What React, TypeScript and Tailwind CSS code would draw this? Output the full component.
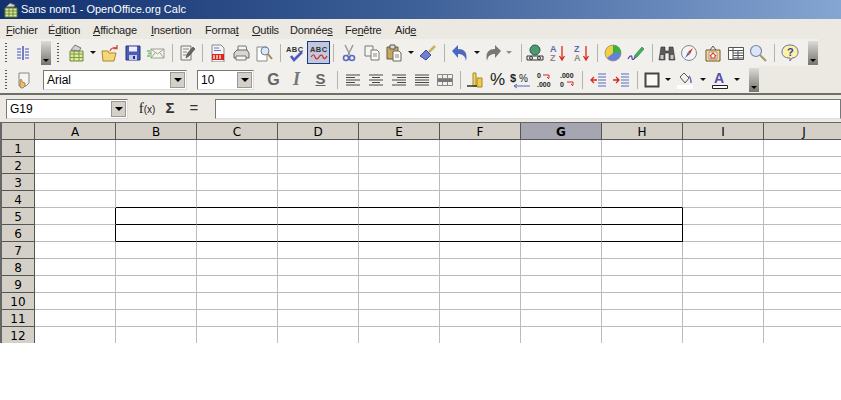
import type { ReactNode } from "react";

const COLS = ["A", "B", "C", "D", "E", "F", "G", "H", "I", "J"];
const ROWS = [1, 2, 3, 4, 5, 6, 7, 8, 9, 10, 11, 12];

function Svg({ children }: { children: ReactNode }) {
  return (
    <svg width="18" height="18" viewBox="0 0 18 18" fill="none">
      {children}
    </svg>
  );
}

function Btn({ children, w = "w-[23px]" }: { children: ReactNode; w?: string }) {
  return <div className={`flex h-[22px] shrink-0 items-center justify-center ${w}`}>{children}</div>;
}

function Sep() {
  return (
    <div className="flex h-[22px] w-[8px] shrink-0 items-center justify-center">
      <div className="h-[18px] w-px bg-[#b5b3aa]" />
    </div>
  );
}

function Arrow({ light }: { light?: boolean }) {
  return (
    <div className="flex h-[22px] w-[10px] shrink-0 items-center justify-center">
      <div
        className={`h-0 w-0 border-x-[3px] border-t-[3px] border-x-transparent ${
          light ? "border-t-[#8f8f8f]" : "border-t-[#111]"
        }`}
      />
    </div>
  );
}

function Grip() {
  return <div className="ml-[5px] h-[20px] w-[2px] shrink-0 bg-[repeating-linear-gradient(to_bottom,#555_0,#555_1px,transparent_1px,transparent_3px)]" />;
}

function Handle() {
  return (
    <div className="flex h-[24px] w-[10px] shrink-0 items-end justify-center bg-gradient-to-b from-[#dcdbd6] to-[#76766f] pb-[3px]">
      <div className="h-0 w-0 border-x-[3px] border-t-[3px] border-x-transparent border-t-black" />
    </div>
  );
}

function Combo({ value, w }: { value: string; w: string }) {
  return (
    <div className={`flex h-[20px] shrink-0 items-center justify-between border border-[#777] border-r-[#ddd] border-b-[#ddd] bg-white pl-[2px] pr-[1px] text-[12px] text-black ${w}`}>
      <span className="pl-px">{value}</span>
      <div className="flex h-[16px] w-[15px] items-center justify-center border border-[#999] bg-[#d4d0c8]">
        <div className="h-0 w-0 border-x-[4px] border-t-[4px] border-x-transparent border-t-black" />
      </div>
    </div>
  );
}

const IconColumns = () => (
  <Svg>
    <path d="M9 2v14" stroke="#3b4cb0" strokeWidth="1.4" />
    <path d="M3 5h4M3 8h4M3 11h4M3 14h4M11 5h4M11 8h4M11 11h4M11 14h4" stroke="#4252b8" strokeWidth="1.2" />
  </Svg>
);
const IconNewSheet = () => (
  <Svg>
    <path d="M3 7h13v10H3z" fill="#dfe9a8" stroke="#6c8a2e" />
    <path d="M3 10h13M3 13.500h13M7 7v10M12 7v10" stroke="#7d9a3c" />
    <path d="M4 6l4-5 6 3-2 3z" fill="#d2d2d2" stroke="#777" />
  </Svg>
);
const IconOpen = () => (
  <Svg>
    <path d="M1 7h6l1 2h7l-2 8H2z" fill="#f5d67a" stroke="#a98a2a" />
    <path d="M9 7c1-3 4-4 7-3M16 1v3.500h-3.500" stroke="#d8482e" strokeWidth="1.3" />
  </Svg>
);
const IconSave = () => (
  <Svg>
    <path d="M2 2h14v14H2z" fill="#4c5cb4" stroke="#27327a" />
    <path d="M5 2.500h8v5H5z" fill="#eef" />
    <path d="M5 11h8v5H5z" fill="#c5c9e8" />
    <path d="M9 12h2v3H9z" fill="#27327a" />
  </Svg>
);
const IconMail = () => (
  <Svg>
    <path d="M4 5h13v9H4z" fill="#f3f5ee" stroke="#9aa28f" />
    <path d="M4 5l6.500 5L17 5M4 14l4-5M17 14l-4-5" stroke="#9aa28f" />
    <path d="M0 7h3M1 9.500h3M0 12h3" stroke="#6cc26a" strokeWidth="1.3" />
  </Svg>
);
const IconEdit = () => (
  <Svg>
    <path d="M3 2h10v14H3z" fill="#f4f3ee" stroke="#777" />
    <path d="M5 5h6M5 8h4M5 11h3" stroke="#888" />
    <path d="M8 14l1-4 6-7 2 2-6 7z" fill="#666" stroke="#444" strokeWidth="0.6" />
  </Svg>
);
const IconPdf = () => (
  <Svg>
    <path d="M3 1h9l3 3v14H3z" fill="#f4f4f4" stroke="#888" />
    <path d="M5 4h5M5 6.500h7" stroke="#6a78c8" />
    <path d="M3 10h12v6H3z" fill="#d8281e" />
    <path d="M5 11v4M8 11v4M11 11v4" stroke="#fff" strokeWidth="1.2" />
  </Svg>
);
const IconPrint = () => (
  <Svg>
    <path d="M6 2h8l1 5H6z" fill="#f5f5f5" stroke="#777" />
    <path d="M2 9l3-3h10l2 3v5H2z" fill="#d6d6d2" stroke="#666" />
    <path d="M4 12h10v4H4z" fill="#f5f5f5" stroke="#777" />
  </Svg>
);
const IconPreview = () => (
  <Svg>
    <path d="M2 3h10v14H2z" fill="#fff" stroke="#888" />
    <circle cx="10" cy="7" r="4" fill="#dbe6f6" stroke="#6d7f9c" />
    <path d="M13 10l4 5" stroke="#a48a4a" strokeWidth="2" />
  </Svg>
);
const IconSpell = ({ wave }: { wave?: boolean }) => (
  <svg width="20" height="18" viewBox="0 0 20 18" fill="none">
    <text x="1" y="8" fontSize="7.500" fontWeight="700" fontFamily="Liberation Sans, sans-serif" fill="#333" letterSpacing="0.4">
      ABC
    </text>
    {wave ? (
      <path d="M2 13c2-3 3-3 4 0s3 2 4 0 3-3 4 0 3 1 4-1" stroke="#d8281e" strokeWidth="1.2" />
    ) : (
      <path d="M6 12l3 4 8-8" stroke="#4c5cc0" strokeWidth="2.600" />
    )}
  </svg>
);
const IconCut = () => (
  <Svg>
    <path d="M5 1l5 10M13 1L8 11" stroke="#9a9a9a" strokeWidth="1.5" />
    <circle cx="6" cy="14" r="2.500" stroke="#5a68c0" strokeWidth="1.600" />
    <circle cx="12" cy="14" r="2.500" stroke="#5a68c0" strokeWidth="1.600" />
  </Svg>
);
const IconCopy = () => (
  <Svg>
    <path d="M2 2h8v10H2z" fill="#f5f5f0" stroke="#777" />
    <path d="M8 6h6l2 2v8H8z" fill="#fafaf5" stroke="#777" />
    <path d="M10 10h4M10 12h4" stroke="#888" />
  </Svg>
);
const IconPaste = () => (
  <Svg>
    <path d="M2 3h11v12H2z" fill="#c8a860" stroke="#6a5a30" />
    <path d="M5 1h5v4H5z" fill="#ddd" stroke="#555" />
    <path d="M8 7h6l2 2v8H8z" fill="#fafaf5" stroke="#666" />
    <path d="M10 11h4M10 13h4" stroke="#888" />
  </Svg>
);
const IconBrush = () => (
  <Svg>
    <path d="M1 12l6-6 5 5-5 5z" fill="#7080d0" stroke="#3c4a9c" />
    <path d="M10 8l6-6" stroke="#c8b060" strokeWidth="2.500" />
  </Svg>
);
const IconUndo = ({ color, flip }: { color: string; flip?: boolean }) => (
  <svg width="18" height="18" viewBox="0 0 18 18" fill="none" className={flip ? "-scale-x-100" : ""}>
    <path d="M1 7l6-6v4c6 0 10 3 8 12-1-5-3-7-8-7v4z" fill={color} />
  </svg>
);
const IconNavigator = () => (
  <Svg>
    <circle cx="9" cy="6" r="5" fill="#4c9a70" stroke="#2d5a46" />
    <path d="M1 12h16v4H1z" fill="#f0f0f0" stroke="#333" />
    <circle cx="5" cy="14" r="1.500" stroke="#333" />
    <circle cx="13" cy="14" r="1.500" stroke="#333" />
  </Svg>
);
const IconSort = ({ top, bottom }: { top: string; bottom: string }) => (
  <svg width="18" height="18" viewBox="0 0 18 18" fill="none">
    <text x="1" y="8" fontSize="9" fontWeight="700" fontFamily="Liberation Sans, sans-serif" fill="#5b68b8">
      {top}
    </text>
    <text x="1" y="17" fontSize="9" fontWeight="700" fontFamily="Liberation Sans, sans-serif" fill="#8a8a8a">
      {bottom}
    </text>
    <path d="M13 2v13M10.500 12l2.500 4 2.500-4" stroke="#d8281e" strokeWidth="1.300" />
  </svg>
);
const IconChart = () => (
  <Svg>
    <circle cx="9" cy="9" r="8" fill="#f0d040" stroke="#777" strokeWidth="0.6" />
    <path d="M9 9V1a8 8 0 0 1 8 8z" fill="#3cb043" />
    <path d="M9 9h8a8 8 0 0 1-14 5z" fill="#6a7fd8" />
  </Svg>
);
const IconDraw = () => (
  <Svg>
    <path d="M1 15c2-4 4-4 4-1s3 1 4-2" stroke="#5a3cb0" strokeWidth="1.200" />
    <path d="M8 11l7-8 2 2-7 8-3 1z" fill="#3cb05a" stroke="#2a7a40" strokeWidth="0.600" />
  </Svg>
);
const IconBinoculars = () => (
  <Svg>
    <path d="M3 3h4v4h4V3h4l2 13h-6V9H7v7H1z" fill="#5a5a5a" stroke="#333" strokeWidth="0.600" />
    <path d="M2.500 11h3v4h-3zM12.500 11h3v4h-3z" fill="#c8c8c8" />
  </Svg>
);
const IconCompass = () => (
  <Svg>
    <circle cx="9" cy="9" r="7.500" fill="#f4f4f4" stroke="#888" />
    <path d="M13 4l-3 6-2-2z" fill="#d8281e" />
    <path d="M5 14l3-6 2 2z" fill="#5a68c0" />
  </Svg>
);
const IconGallery = () => (
  <Svg>
    <path d="M2 6h14v11H2z" fill="#f3dc9a" stroke="#6a5a30" />
    <path d="M5 8h8v7H5z" fill="#fff" stroke="#a88" />
    <path d="M6 12l3-3 3 3M7 12v2h4v-2" stroke="#d83a1e" strokeWidth="1.100" />
    <path d="M6 6l3-4 3 4" stroke="#555" />
  </Svg>
);
const IconTable = () => (
  <Svg>
    <path d="M1.500 3.500h15v12h-15z" fill="#fff" stroke="#555" />
    <path d="M1.500 6.500h15M6 9h10M6 11.500h10M6 14h10M6 3.500v12M11 6.500v9" stroke="#555" />
  </Svg>
);
const IconZoom = () => (
  <Svg>
    <circle cx="7" cy="7" r="5.500" fill="#dbe6f6" stroke="#7686a8" strokeWidth="1.200" />
    <path d="M11 11l6 6" stroke="#a69a6a" strokeWidth="2.200" />
  </Svg>
);
const IconHelp = () => (
  <Svg>
    <path d="M9 1c5 0 8 3 8 7s-3 6-6 6l-2 3v-3c-5 0-8-2-8-6s3-7 8-7z" fill="#fbf3a0" stroke="#6a6ab0" />
    <text x="6" y="12" fontSize="11" fontWeight="700" fontFamily="Liberation Sans, sans-serif" fill="#3c3c9c">
      ?
    </text>
  </Svg>
);
const IconCard = () => (
  <Svg>
    <path d="M6 2h10v10l-3 3H6z" fill="#f5f5f0" stroke="#888" />
    <path d="M7 16V9.500c0-1.500 2-1.500 2 0V11l3 1v3l-2 2H8z" fill="#e8c070" stroke="#8a6a2a" strokeWidth="0.700" />
  </Svg>
);
const Lines = ({ kind }: { kind: "l" | "c" | "r" | "j" }) => {
  const d = {
    l: "M2 4h14M2 6.500h9M2 9h14M2 11.500h9M2 14h14",
    c: "M2 4h14M5 6.500h8M2 9h14M5 11.500h8M2 14h14",
    r: "M2 4h14M7 6.500h9M2 9h14M7 11.500h9M2 14h14",
    j: "M2 4h14M2 6.500h14M2 9h14M2 11.500h14M2 14h14",
  }[kind];
  return (
    <Svg>
      <path d={d} stroke="#333" strokeWidth="0.900" />
    </Svg>
  );
};
const IconMerge = () => (
  <Svg>
    <path d="M1.500 3.500h15v11h-15z" fill="#f0f0ec" stroke="#8a8a8a" />
    <path d="M2 7h14v4H2z" fill="#777" />
    <path d="M1.500 7.500h15M6.500 3.500v4M11.500 3.500v4M6.500 11v3.500M11.500 11v3.500" stroke="#8a8a8a" />
  </Svg>
);
const IconCoins = () => (
  <Svg>
    <path d="M11 7h5v9h-5z" fill="#f2cc4a" stroke="#a68820" />
    <path d="M7 2h3v13H7z" fill="#f0d468" stroke="#a68820" />
    <path d="M1 15h10" stroke="#333" strokeWidth="1.500" />
  </Svg>
);
const IconMoney = () => (
  <svg width="22" height="18" viewBox="0 0 22 18" fill="none">
    <text x="0" y="11" fontSize="11" fontWeight="700" fontFamily="Liberation Sans, sans-serif" fill="#222">
      $
    </text>
    <text x="9" y="11" fontSize="10" fontFamily="Liberation Sans, sans-serif" fill="#222">
      %
    </text>
    <path d="M20 15H4M7 13l-3 2 3 2" stroke="#5a68c0" />
  </svg>
);
const IconDecimal = ({ remove }: { remove?: boolean }) => (
  <svg width="20" height="18" viewBox="0 0 20 18" fill="none">
    <text x="3" y="7" fontSize="7" fontWeight="700" fontFamily="Liberation Sans, sans-serif" fill="#222">
      {remove ? ".000" : "0"}
    </text>
    <text x="3" y="16" fontSize="7" fontWeight="700" fontFamily="Liberation Sans, sans-serif" fill="#222">
      {remove ? "0" : ".000"}
    </text>
    <path d={remove ? "M10 11h6v3M14 13l2 2" : "M9 4h6v3M13 6l2 2"} stroke="#d8281e" />
  </svg>
);
const IconIndent = ({ back }: { back?: boolean }) => (
  <Svg>
    <path d="M9 3h8M9 6h8M9 9h8M9 12h8M9 15h8" stroke="#5a68c0" />
    <path d={back ? "M8 9H2M5 6L2 9l3 3" : "M1 9h6M4 6l3 3-3 3"} stroke="#d8281e" strokeWidth="1.300" />
  </Svg>
);
const IconBorder = () => (
  <Svg>
    <path d="M2.500 2.500h13v13h-13z" stroke="#444" strokeWidth="2" fill="#f8f8f4" />
  </Svg>
);
const IconBucket = () => (
  <Svg>
    <path d="M4 6l4-4 5 5-4 5z" fill="#f0f0f0" stroke="#555" />
    <path d="M13 5c2 2 2 4 2 7" stroke="#6a6ab0" strokeWidth="1.400" />
    <path d="M1 14h16v4H1z" fill="#fff" />
  </Svg>
);
const IconFontColor = () => (
  <svg width="18" height="18" viewBox="0 0 18 18" fill="none">
    <text x="3" y="12" fontSize="14" fontWeight="700" fontFamily="Liberation Sans, sans-serif" fill="#5a4ca8">
      A
    </text>
    <path d="M1.500 14.500h15v3h-15z" fill="#fff" stroke="#222" />
  </svg>
);

function Glyph({ children, className }: { children: ReactNode; className: string }) {
  return <span className={className}>{children}</span>;
}

function MenuItem({ before, key_, after, w }: { before?: string; key_: string; after?: string; w: string }) {
  return (
    <div className={`shrink-0 ${w}`}>
      {before}
      <u>{key_}</u>
      {after}
    </div>
  );
}

function Toolbar1() {
  return (
    <div className="flex h-[27px] w-[818px] items-center bg-[#f1f0ec]">
      <Grip />
      <div className="w-[5px]" />
      <Btn w="w-[22px]"><IconColumns /></Btn>
      <div className="w-[7px]" />
      <Handle />
      <div className="w-px" />
      <Grip />
      <div className="w-[5px]" />
      <Btn w="w-[24px]"><IconNewSheet /></Btn>
      <Arrow />
      <Btn w="w-[24px]"><IconOpen /></Btn>
      <Btn w="w-[22px]"><IconSave /></Btn>
      <Btn w="w-[24px]"><IconMail /></Btn>
      <Sep />
      <Btn w="w-[22px]"><IconEdit /></Btn>
      <Sep />
      <Btn w="w-[24px]"><IconPdf /></Btn>
      <Btn w="w-[22px]"><IconPrint /></Btn>
      <Btn w="w-[24px]"><IconPreview /></Btn>
      <Sep />
      <Btn w="w-[22px]"><IconSpell /></Btn>
      <div className="w-px" />
      <div className="flex h-[23px] w-[23px] shrink-0 items-center justify-center border border-[#1c3a7a] bg-[#c1c8de]">
        <IconSpell wave />
      </div>
      <div className="flex h-[22px] w-[6px] shrink-0 items-center justify-center">
        <div className="h-[18px] w-px bg-[#b5b3aa]" />
      </div>
      <Btn w="w-[26px]"><IconCut /></Btn>
      <Btn w="w-[20px]"><IconCopy /></Btn>
      <Btn w="w-[24px]"><IconPaste /></Btn>
      <Arrow />
      <Btn w="w-[24px]"><IconBrush /></Btn>
      <Sep />
      <Btn w="w-[24px]"><IconUndo color="#4c68c0" /></Btn>
      <Arrow />
      <Btn w="w-[22px]"><IconUndo color="#777" flip /></Btn>
      <Arrow light />
      <div className="w-[3px]" />
      <Sep />
      <Btn w="w-[20px]"><IconNavigator /></Btn>
      <Btn w="w-[26px]"><IconSort top="A" bottom="Z" /></Btn>
      <Btn w="w-[22px]"><IconSort top="Z" bottom="A" /></Btn>
      <Sep />
      <Btn w="w-[24px]"><IconChart /></Btn>
      <Btn w="w-[22px]"><IconDraw /></Btn>
      <div className="w-px" />
      <Sep />
      <Btn w="w-[22px]"><IconBinoculars /></Btn>
      <Btn w="w-[22px]"><IconCompass /></Btn>
      <Btn w="w-[26px]"><IconGallery /></Btn>
      <Btn w="w-[20px]"><IconTable /></Btn>
      <Btn w="w-[24px]"><IconZoom /></Btn>
      <Sep />
      <Btn w="w-[24px]"><IconHelp /></Btn>
      <div className="w-[6px]" />
      <Handle />
    </div>
  );
}

function Toolbar2() {
  return (
    <div className="flex h-[27px] w-[759px] items-center bg-[#f1f0ec] font-['Liberation_Sans',sans-serif]">
      <Grip />
      <div className="w-[5px]" />
      <Btn w="w-[20px]"><IconCard /></Btn>
      <div className="w-[11px]" />
      <Combo value="Arial" w="w-[144px]" />
      <div className="w-[10px]" />
      <Combo value="10" w="w-[57px]" />
      <div className="w-[8px]" />
      <Btn><Glyph className="text-[16px] font-bold text-[#666]">G</Glyph></Btn>
      <Btn><Glyph className="font-['Liberation_Serif',serif] text-[18px] font-bold italic text-[#777]">I</Glyph></Btn>
      <Btn w="w-[25px]"><Glyph className="text-[15px] font-bold text-[#666] underline">S</Glyph></Btn>
      <Sep />
      <Btn><Lines kind="l" /></Btn>
      <Btn><Lines kind="c" /></Btn>
      <Btn><Lines kind="r" /></Btn>
      <Btn><Lines kind="j" /></Btn>
      <Btn><IconMerge /></Btn>
      <Sep />
      <Btn w="w-[22px]"><IconCoins /></Btn>
      <Btn><Glyph className="text-[17px] text-[#222]">%</Glyph></Btn>
      <Btn><IconMoney /></Btn>
      <Btn><IconDecimal /></Btn>
      <Btn><IconDecimal remove /></Btn>
      <Sep />
      <Btn w="w-[24px]"><IconIndent back /></Btn>
      <Btn w="w-[22px]"><IconIndent /></Btn>
      <div className="w-px" />
      <Sep />
      <Btn w="w-[22px]"><IconBorder /></Btn>
      <Arrow />
      <Btn w="w-[24px]"><IconBucket /></Btn>
      <div className="w-px" />
      <Arrow />
      <Btn w="w-[24px]"><IconFontColor /></Btn>
      <Arrow />
      <div className="w-[7px]" />
      <Handle />
    </div>
  );
}

function FormulaBar() {
  return (
    <div className="flex h-[29px] items-center border-t-2 border-t-[#6f6f6a] bg-[#ece9e2] pl-[6px] font-['Liberation_Sans',sans-serif]">
      <Combo value="G19" w="w-[122px]" />
      <div className="w-[7px]" />
      <Btn w="w-[24px]">
        <span className="font-['Liberation_Serif',serif] text-[15px] text-[#222]">
          f<span className="font-['Liberation_Sans',sans-serif] text-[10px]">(x)</span>
        </span>
      </Btn>
      <Btn w="w-[22px]"><span className="text-[15px] font-bold text-[#333]">Σ</span></Btn>
      <Btn w="w-[26px]"><span className="text-[15px] text-[#333]">=</span></Btn>
      <div className="w-[8px]" />
      <div className="h-[20px] flex-1 border border-[#777] border-b-[#ddd] bg-white" />
    </div>
  );
}

function Sheet() {
  return (
    <div className="h-[221px] overflow-hidden border-t border-l-2 border-t-[#666] border-l-[#666] font-['DejaVu_Sans',sans-serif] text-[12px] text-black">
      <div className="grid w-[900px] grid-cols-[33px_repeat(10,81px)] auto-rows-[17px]">
        <div className="border-r border-b border-[#555] bg-[#d4d0c8]" />
        {COLS.map((c) => (
          <div
            key={c}
            className={`flex items-center justify-center border-r border-b border-[#555] pt-px ${
              c === "G" ? "bg-[#a6a6b2] font-bold" : "bg-[#d4d0c8]"
            }`}
          >
            {c}
          </div>
        ))}
        {ROWS.map((r) => (
          <Row key={r} row={r} />
        ))}
      </div>
    </div>
  );
}

function Row({ row }: { row: number }) {
  return (
    <>
      <div className="flex items-center justify-center border-r border-b border-[#555] bg-[#d4d0c8] pt-[2px]">{row}</div>
      {COLS.map((c) => {
        const inBox = "BCDEFGH".includes(c);
        const blackBottom = inBox && (row === 4 || row === 5 || row === 6);
        const blackRight = (row === 5 || row === 6) && (c === "A" || c === "H");
        return (
          <div
            key={c}
            className={`border-r border-b bg-white ${blackBottom ? "border-b-black" : "border-b-[#bcbcbc]"} ${
              blackRight ? "border-r-black" : "border-r-[#bcbcbc]"
            }`}
          />
        );
      })}
    </>
  );
}

export default function App() {
  return (
    <div className="h-[400px] w-[841px] overflow-hidden bg-white">
      <div className="flex h-[19px] items-center bg-gradient-to-r from-[#10306e] via-[#3f6199] to-[#85a5d2] pl-[3px] font-['Liberation_Sans',sans-serif] text-[11px] text-white">
        <svg width="16" height="16" viewBox="0 0 16 16" fill="none">
          <path d="M2 6h12v9H2z" fill="#d9e6a8" stroke="#5d7a2a" />
          <path d="M2 9h12M2 12h12M6 6v9M10 6v9" stroke="#6c8a2e" />
          <path d="M3 5l4-4 5 2-1 2z" fill="#d4d4d4" stroke="#666" />
        </svg>
        <span className="ml-[2px]">Sans nom1 - OpenOffice.org Calc</span>
      </div>
      <div className="flex h-[20px] items-center bg-[#ece9e2] pt-[2px] pl-[6px] font-['Liberation_Sans',sans-serif] text-[11px] tracking-[-0.2px] text-[#222]">
        <MenuItem key_="F" after="ichier" w="w-[42px]" />
        <MenuItem before="É" key_="d" after="ition" w="w-[45px]" />
        <MenuItem key_="A" after="ffichage" w="w-[58px]" />
        <MenuItem key_="I" after="nsertion" w="w-[54px]" />
        <MenuItem before="Forma" key_="t" w="w-[47px]" />
        <MenuItem key_="O" after="utils" w="w-[38px]" />
        <MenuItem before="Donnée" key_="s" w="w-[55px]" />
        <MenuItem before="Fe" key_="n" after="être" w="w-[50px]" />
        <MenuItem before="Aid" key_="e" w="w-[30px]" />
      </div>
      <div className="bg-[#ece9e2]">
        <Toolbar1 />
        <Toolbar2 />
      </div>
      <FormulaBar />
      <Sheet />
    </div>
  );
}
